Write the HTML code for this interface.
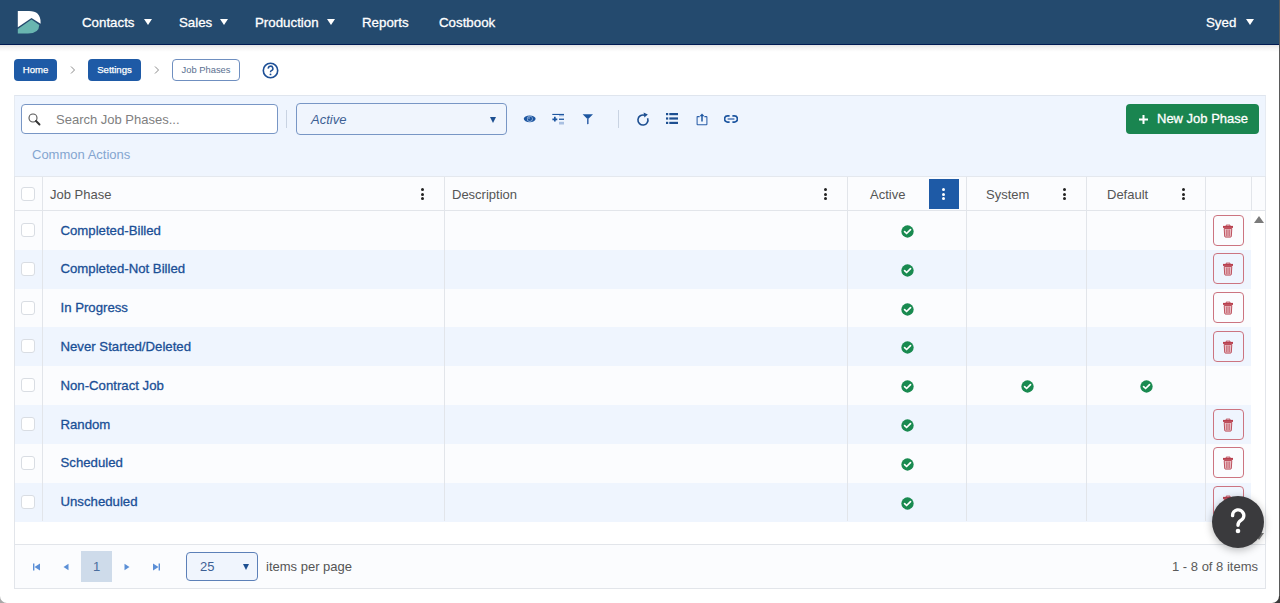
<!DOCTYPE html>
<html><head><meta charset="utf-8">
<style>
*{box-sizing:border-box;margin:0;padding:0}
html,body{width:1280px;height:603px;overflow:hidden;background:#fff;font-family:"Liberation Sans",sans-serif;position:relative}
.abs{position:absolute}
#nav{position:absolute;left:0;top:0;width:1280px;height:45px;background:#244a6e;border-bottom:1px solid #001a52}
#navsh{position:absolute;left:0;top:45px;width:1280px;height:7px;background:linear-gradient(#e3e3e3,#f4f4f4 40%,#fff)}
#nav .it{position:absolute;top:15px;color:#fff;font-size:13.3px;-webkit-text-stroke:0.3px #fff;white-space:nowrap;line-height:16px}
.tri{position:absolute;width:0;height:0;border-left:4px solid transparent;border-right:4px solid transparent;border-top:6px solid #fff}
.bc{position:absolute;top:59px;height:22px;border-radius:4px;background:#1e5aa6;color:#fff;font-size:9.6px;-webkit-text-stroke:0.25px #fff;line-height:21px;text-align:center}
.chev{position:absolute;top:66px}
#panel{position:absolute;left:14px;top:95px;width:1252px;height:82px;background:#eff5fe;border-top:1px solid #dfe5ee;border-left:1px solid #e6ebf2;border-right:1px solid #e6ebf2}
.inp{position:absolute;border:1px solid #7896c5;border-radius:4px}
.ico{position:absolute}
#grid{position:absolute;left:14px;top:176px;width:1252px;height:413px;border:1px solid #e2e5ea;border-top:1px solid #e4e8ee;background:#fff}
.hdr{position:absolute;left:0;top:0;width:1250px;height:34px;background:#fbfcfe;border-bottom:1px solid #e2e5ea}
.vl{position:absolute;width:1px;background:#e2e5ea}
.th{position:absolute;top:10px;font-size:13px;color:#555;line-height:16px;white-space:nowrap}
.keb{position:absolute;width:3px;top:11px}
.keb i{display:block;width:3px;height:3px;border-radius:50%;background:#222;margin-bottom:1.5px}
.row{position:absolute;left:0;width:1236px;height:39px}
.odd{background:#fbfcfe}
.even{background:#eff5fe}
.cb{position:absolute;left:6px;width:14px;height:14px;border:1px solid #d9dde3;border-radius:3px;background:#fff}
.lnk{position:absolute;left:45.5px;font-size:13.2px;-webkit-text-stroke:0.3px #1a4f96;color:#1a4f96;line-height:16px;white-space:nowrap}
.chk{position:absolute}
.trash{position:absolute;left:1198px;top:3.5px;width:31px;height:31px;border:1px solid #cc7480;border-radius:4px}
.trash svg{position:absolute;left:8px;top:8px}
#pager{position:absolute;left:0;top:367px;width:1250px;height:44px;background:#fbfcfe;border-top:1px solid #e2e5ea}
</style></head><body>
<div id="nav">
  <svg class="abs" style="left:17px;top:10px" width="25" height="25" viewBox="0 0 25 25">
    <path d="M0.8 1.1 H12 Q23.6 1.1 23.6 12.5 V13.8 L14.5 7.9 L0.8 17.2 Z" fill="#fff"/>
    <path d="M0.8 23.6 V18.9 L14.5 9.6 L22.3 15 Q22 23.6 11 23.6 Z" fill="#69b5b0"/>
  </svg>
  <div class="it" style="left:82px">Contacts</div><div class="tri" style="left:144px;top:19px"></div>
  <div class="it" style="left:179px">Sales</div><div class="tri" style="left:220px;top:19px"></div>
  <div class="it" style="left:255px">Production</div><div class="tri" style="left:327px;top:19px"></div>
  <div class="it" style="left:362px">Reports</div>
  <div class="it" style="left:439px">Costbook</div>
  <div class="it" style="left:1206px">Syed</div><div class="tri" style="left:1246px;top:19px"></div>
</div>
<div id="navsh"></div>
<div class="bc" style="left:14px;width:43px">Home</div>
<svg class="chev" style="left:70px" width="6" height="8" viewBox="0 0 6 8"><path d="M1 0.5 L4.5 4 L1 7.5" stroke="#8a8a8a" stroke-width="1" fill="none"/></svg>
<div class="bc" style="left:88px;width:53px">Settings</div>
<svg class="chev" style="left:154px" width="6" height="8" viewBox="0 0 6 8"><path d="M1 0.5 L4.5 4 L1 7.5" stroke="#8a8a8a" stroke-width="1" fill="none"/></svg>
<div class="bc" style="left:172px;width:68px;background:#fff;border:1px solid #6f8fc0;color:#5a6f90;-webkit-text-stroke:0;font-size:9.4px;line-height:20px">Job Phases</div>
<svg class="abs" style="left:262px;top:62px" width="17" height="17" viewBox="0 0 17 17"><circle cx="8.5" cy="8.5" r="7.2" stroke="#1d4f96" stroke-width="1.6" fill="none"/><path d="M6.3 6.6 A2.3 2.3 0 1 1 9.4 8.6 Q8.5 9 8.5 10.2" stroke="#1d4f96" stroke-width="1.5" fill="none"/><circle cx="8.5" cy="12.4" r="0.95" fill="#1d4f96"/></svg>

<div id="panel"></div>
<!-- search -->
<div class="inp" style="left:21px;top:104px;width:257px;height:30px;background:#fff">
  <svg class="abs" style="left:6px;top:8px" width="13" height="13" viewBox="0 0 13 13"><circle cx="5" cy="5" r="4" stroke="#555" stroke-width="1.1" fill="none"/><path d="M8 8 L11.5 11.5" stroke="#333" stroke-width="1.9" stroke-linecap="round"/></svg>
  <div class="abs" style="left:34px;top:7px;font-size:13px;color:#808080;line-height:16px;white-space:nowrap">Search Job Phases...</div>
</div>
<div class="abs" style="left:286px;top:110px;width:1px;height:18px;background:#c9d3e2"></div>
<div class="inp" style="left:296px;top:103px;width:211px;height:32px;background:#f0f5fd">
  <div class="abs" style="left:14px;top:8px;font-size:13px;font-style:italic;color:#3d5f94;line-height:16px">Active</div>
  <div class="abs" style="left:193px;top:13px;width:0;height:0;border-left:3.5px solid transparent;border-right:3.5px solid transparent;border-top:6px solid #1d4f91"></div>
</div>
<!-- icons -->
<svg class="ico" style="left:523px;top:114px" width="14" height="10" viewBox="0 0 14 10"><ellipse cx="6.7" cy="4.8" rx="5.9" ry="3.4" fill="#1d56a0"/><circle cx="6.8" cy="4.8" r="2.9" fill="#a8c0e4"/><circle cx="6.8" cy="4.8" r="2.3" fill="#1d56a0"/><circle cx="6" cy="4" r="0.7" fill="#c8d8f0"/></svg>
<svg class="ico" style="left:552px;top:113px" width="13" height="12" viewBox="0 0 13 12"><rect x="0.3" y="0.9" width="11.7" height="1.1" fill="#1d56a0"/><rect x="7" y="2" width="5" height="1.3" fill="#9db6dc"/><rect x="7" y="5.6" width="5" height="1.3" fill="#1d56a0"/><rect x="7" y="8.8" width="5" height="2.7" fill="#a9c0e2"/><path d="M0.4 6.3 H5.3 M2.85 3.8 V8.6" stroke="#1d56a0" stroke-width="1.7"/></svg>
<svg class="ico" style="left:582px;top:113px" width="12" height="12" viewBox="0 0 12 12"><path d="M0.6 1.2 H11 L6.5 5.8 H5.1 Z" fill="#1d56a0"/><path d="M5 5.5 H6.6 V10.5 L5.8 11.6 L5 10.5 Z" fill="#3d6aae"/></svg>
<div class="abs" style="left:618px;top:110px;width:1px;height:18px;background:#c9d3e2"></div>
<svg class="ico" style="left:636px;top:112px" width="14" height="15" viewBox="0 0 14 15"><path d="M8.6 3.3 A5 5 0 1 0 11.6 6.2" stroke="#1d4f91" stroke-width="1.6" fill="none"/><path d="M7.6 0.6 L11.8 2.6 L8.4 5.6 Z" fill="#1d4f91"/></svg>
<svg class="ico" style="left:666px;top:113px" width="12" height="11" viewBox="0 0 12 11"><rect x="0" y="0" width="2.2" height="2.2" fill="#1d4f91"/><rect x="3.3" y="0" width="8.7" height="2.2" fill="#1d4f91"/><rect x="0" y="4.4" width="2.2" height="2.2" fill="#1d4f91"/><rect x="3.3" y="4.4" width="8.7" height="2.2" fill="#1d4f91"/><rect x="0" y="8.8" width="2.2" height="2.2" fill="#1d4f91"/><rect x="3.3" y="8.8" width="8.7" height="2.2" fill="#1d4f91"/></svg>
<svg class="ico" style="left:696px;top:113px" width="12" height="13" viewBox="0 0 12 13"><path d="M3.6 3.6 H1.6 Q1.1 3.6 1.1 4.1 V11.3 Q1.1 11.8 1.6 11.8 H10.4 Q10.9 11.8 10.9 11.3 V4.1 Q10.9 3.6 10.4 3.6 H8.4" stroke="#2a5ea8" stroke-width="1.05" fill="none"/><path d="M6 8.6 V2.2" stroke="#1d56a0" stroke-width="1.5"/><path d="M3.5 3.3 L6 0.5 L8.5 3.3 Z" fill="#1d56a0"/></svg>
<svg class="ico" style="left:724px;top:115px" width="14" height="8" viewBox="0 0 14 8"><path d="M5.6 0.95 H3.6 A3 3 0 0 0 3.6 7.05 H5.6" stroke="#1d56a0" stroke-width="1.7" fill="none"/><path d="M8.4 0.95 H10.4 A3 3 0 0 1 10.4 7.05 H8.4" stroke="#1d56a0" stroke-width="1.7" fill="none"/><rect x="3.6" y="3.2" width="6.8" height="1.6" fill="#5a82bd"/></svg>
<!-- new button -->
<div class="abs" style="left:1126px;top:104px;width:133px;height:30px;background:#1a8550;border-radius:4px">
  <svg class="abs" style="left:13px;top:11px" width="9" height="9" viewBox="0 0 9 9"><path d="M4.5 0 V9 M0 4.5 H9" stroke="#fff" stroke-width="2"/></svg>
  <div class="abs" style="left:31px;top:7px;font-size:13px;-webkit-text-stroke:0.3px #fff;color:#fff;line-height:16px;white-space:nowrap">New Job Phase</div>
</div>
<div class="abs" style="left:32px;top:147px;font-size:13px;color:#84a5d0;line-height:16px;white-space:nowrap">Common Actions</div>

<!-- grid -->
<div id="grid">
  <div class="hdr">
    <div class="cb" style="top:10px"></div>
    <div class="th" style="left:35px">Job Phase</div>
    <div class="keb" style="left:406px"><i></i><i></i><i></i></div>
    <div class="th" style="left:437px">Description</div>
    <div class="keb" style="left:809px"><i></i><i></i><i></i></div>
    <div class="th" style="left:855px">Active</div>
    <div class="abs" style="left:914px;top:2px;width:30px;height:30px;background:#1e5aa6"></div>
    <div class="keb" style="left:927px;top:11px"><i style="background:#fff"></i><i style="background:#fff"></i><i style="background:#fff"></i></div>
    <div class="th" style="left:971px">System</div>
    <div class="keb" style="left:1048px"><i></i><i></i><i></i></div>
    <div class="th" style="left:1092px">Default</div>
    <div class="keb" style="left:1167px"><i></i><i></i><i></i></div>
  </div>
  <div class="row odd" style="top:34.0px"><div class="cb" style="top:12px"></div><div class="lnk" style="top:11.5px">Completed-Billed</div><svg class="chk" style="top:14px;left:885.5px" width="13" height="13" viewBox="0 0 13 13"><circle cx="6.5" cy="6.5" r="6.15" fill="#198a50"/><path d="M3.6 6.6 L5.6 8.5 L9.5 4.6" stroke="#fff" stroke-width="1.7" fill="none" stroke-linecap="round" stroke-linejoin="round"/></svg><div class="trash"><svg width="12" height="14" viewBox="0 0 12 14"><path d="M4.2 2 V1.1 H8 V2" fill="none" stroke="#b8404e" stroke-width="0.9"/><rect x="1" y="1.9" width="10" height="2" fill="#b8404e"/><path d="M2.2 4.5 H9.8 L9.3 12.4 Q9.2 13.1 8.5 13.1 H3.5 Q2.8 13.1 2.7 12.4 Z" fill="#e8c0c5" stroke="#b8404e" stroke-width="0.9"/><path d="M4.6 5.5 V12 M6 5.5 V12 M7.4 5.5 V12" stroke="#c0505e" stroke-width="0.7"/></svg></div></div><div class="row even" style="top:72.8px"><div class="cb" style="top:12px"></div><div class="lnk" style="top:11.5px">Completed-Not Billed</div><svg class="chk" style="top:14px;left:885.5px" width="13" height="13" viewBox="0 0 13 13"><circle cx="6.5" cy="6.5" r="6.15" fill="#198a50"/><path d="M3.6 6.6 L5.6 8.5 L9.5 4.6" stroke="#fff" stroke-width="1.7" fill="none" stroke-linecap="round" stroke-linejoin="round"/></svg><div class="trash"><svg width="12" height="14" viewBox="0 0 12 14"><path d="M4.2 2 V1.1 H8 V2" fill="none" stroke="#b8404e" stroke-width="0.9"/><rect x="1" y="1.9" width="10" height="2" fill="#b8404e"/><path d="M2.2 4.5 H9.8 L9.3 12.4 Q9.2 13.1 8.5 13.1 H3.5 Q2.8 13.1 2.7 12.4 Z" fill="#e8c0c5" stroke="#b8404e" stroke-width="0.9"/><path d="M4.6 5.5 V12 M6 5.5 V12 M7.4 5.5 V12" stroke="#c0505e" stroke-width="0.7"/></svg></div></div><div class="row odd" style="top:111.6px"><div class="cb" style="top:12px"></div><div class="lnk" style="top:11.5px">In Progress</div><svg class="chk" style="top:14px;left:885.5px" width="13" height="13" viewBox="0 0 13 13"><circle cx="6.5" cy="6.5" r="6.15" fill="#198a50"/><path d="M3.6 6.6 L5.6 8.5 L9.5 4.6" stroke="#fff" stroke-width="1.7" fill="none" stroke-linecap="round" stroke-linejoin="round"/></svg><div class="trash"><svg width="12" height="14" viewBox="0 0 12 14"><path d="M4.2 2 V1.1 H8 V2" fill="none" stroke="#b8404e" stroke-width="0.9"/><rect x="1" y="1.9" width="10" height="2" fill="#b8404e"/><path d="M2.2 4.5 H9.8 L9.3 12.4 Q9.2 13.1 8.5 13.1 H3.5 Q2.8 13.1 2.7 12.4 Z" fill="#e8c0c5" stroke="#b8404e" stroke-width="0.9"/><path d="M4.6 5.5 V12 M6 5.5 V12 M7.4 5.5 V12" stroke="#c0505e" stroke-width="0.7"/></svg></div></div><div class="row even" style="top:150.4px"><div class="cb" style="top:12px"></div><div class="lnk" style="top:11.5px">Never Started/Deleted</div><svg class="chk" style="top:14px;left:885.5px" width="13" height="13" viewBox="0 0 13 13"><circle cx="6.5" cy="6.5" r="6.15" fill="#198a50"/><path d="M3.6 6.6 L5.6 8.5 L9.5 4.6" stroke="#fff" stroke-width="1.7" fill="none" stroke-linecap="round" stroke-linejoin="round"/></svg><div class="trash"><svg width="12" height="14" viewBox="0 0 12 14"><path d="M4.2 2 V1.1 H8 V2" fill="none" stroke="#b8404e" stroke-width="0.9"/><rect x="1" y="1.9" width="10" height="2" fill="#b8404e"/><path d="M2.2 4.5 H9.8 L9.3 12.4 Q9.2 13.1 8.5 13.1 H3.5 Q2.8 13.1 2.7 12.4 Z" fill="#e8c0c5" stroke="#b8404e" stroke-width="0.9"/><path d="M4.6 5.5 V12 M6 5.5 V12 M7.4 5.5 V12" stroke="#c0505e" stroke-width="0.7"/></svg></div></div><div class="row odd" style="top:189.2px"><div class="cb" style="top:12px"></div><div class="lnk" style="top:11.5px">Non-Contract Job</div><svg class="chk" style="top:14px;left:885.5px" width="13" height="13" viewBox="0 0 13 13"><circle cx="6.5" cy="6.5" r="6.15" fill="#198a50"/><path d="M3.6 6.6 L5.6 8.5 L9.5 4.6" stroke="#fff" stroke-width="1.7" fill="none" stroke-linecap="round" stroke-linejoin="round"/></svg><svg class="chk" style="top:14px;left:1005.5px" width="13" height="13" viewBox="0 0 13 13"><circle cx="6.5" cy="6.5" r="6.15" fill="#198a50"/><path d="M3.6 6.6 L5.6 8.5 L9.5 4.6" stroke="#fff" stroke-width="1.7" fill="none" stroke-linecap="round" stroke-linejoin="round"/></svg><svg class="chk" style="top:14px;left:1125px" width="13" height="13" viewBox="0 0 13 13"><circle cx="6.5" cy="6.5" r="6.15" fill="#198a50"/><path d="M3.6 6.6 L5.6 8.5 L9.5 4.6" stroke="#fff" stroke-width="1.7" fill="none" stroke-linecap="round" stroke-linejoin="round"/></svg></div><div class="row even" style="top:228.0px"><div class="cb" style="top:12px"></div><div class="lnk" style="top:11.5px">Random</div><svg class="chk" style="top:14px;left:885.5px" width="13" height="13" viewBox="0 0 13 13"><circle cx="6.5" cy="6.5" r="6.15" fill="#198a50"/><path d="M3.6 6.6 L5.6 8.5 L9.5 4.6" stroke="#fff" stroke-width="1.7" fill="none" stroke-linecap="round" stroke-linejoin="round"/></svg><div class="trash"><svg width="12" height="14" viewBox="0 0 12 14"><path d="M4.2 2 V1.1 H8 V2" fill="none" stroke="#b8404e" stroke-width="0.9"/><rect x="1" y="1.9" width="10" height="2" fill="#b8404e"/><path d="M2.2 4.5 H9.8 L9.3 12.4 Q9.2 13.1 8.5 13.1 H3.5 Q2.8 13.1 2.7 12.4 Z" fill="#e8c0c5" stroke="#b8404e" stroke-width="0.9"/><path d="M4.6 5.5 V12 M6 5.5 V12 M7.4 5.5 V12" stroke="#c0505e" stroke-width="0.7"/></svg></div></div><div class="row odd" style="top:266.8px"><div class="cb" style="top:12px"></div><div class="lnk" style="top:11.5px">Scheduled</div><svg class="chk" style="top:14px;left:885.5px" width="13" height="13" viewBox="0 0 13 13"><circle cx="6.5" cy="6.5" r="6.15" fill="#198a50"/><path d="M3.6 6.6 L5.6 8.5 L9.5 4.6" stroke="#fff" stroke-width="1.7" fill="none" stroke-linecap="round" stroke-linejoin="round"/></svg><div class="trash"><svg width="12" height="14" viewBox="0 0 12 14"><path d="M4.2 2 V1.1 H8 V2" fill="none" stroke="#b8404e" stroke-width="0.9"/><rect x="1" y="1.9" width="10" height="2" fill="#b8404e"/><path d="M2.2 4.5 H9.8 L9.3 12.4 Q9.2 13.1 8.5 13.1 H3.5 Q2.8 13.1 2.7 12.4 Z" fill="#e8c0c5" stroke="#b8404e" stroke-width="0.9"/><path d="M4.6 5.5 V12 M6 5.5 V12 M7.4 5.5 V12" stroke="#c0505e" stroke-width="0.7"/></svg></div></div><div class="row even" style="top:305.6px"><div class="cb" style="top:12px"></div><div class="lnk" style="top:11.5px">Unscheduled</div><svg class="chk" style="top:14px;left:885.5px" width="13" height="13" viewBox="0 0 13 13"><circle cx="6.5" cy="6.5" r="6.15" fill="#198a50"/><path d="M3.6 6.6 L5.6 8.5 L9.5 4.6" stroke="#fff" stroke-width="1.7" fill="none" stroke-linecap="round" stroke-linejoin="round"/></svg><div class="trash"><svg width="12" height="14" viewBox="0 0 12 14"><path d="M4.2 2 V1.1 H8 V2" fill="none" stroke="#b8404e" stroke-width="0.9"/><rect x="1" y="1.9" width="10" height="2" fill="#b8404e"/><path d="M2.2 4.5 H9.8 L9.3 12.4 Q9.2 13.1 8.5 13.1 H3.5 Q2.8 13.1 2.7 12.4 Z" fill="#e8c0c5" stroke="#b8404e" stroke-width="0.9"/><path d="M4.6 5.5 V12 M6 5.5 V12 M7.4 5.5 V12" stroke="#c0505e" stroke-width="0.7"/></svg></div></div>
  <div class="vl" style="left:27px;top:0;height:344px"></div>
  <div class="vl" style="left:429px;top:0;height:344px"></div>
  <div class="vl" style="left:832px;top:0;height:344px"></div>
  <div class="vl" style="left:951px;top:0;height:344px"></div>
  <div class="vl" style="left:1071px;top:0;height:344px"></div>
  <div class="vl" style="left:1190px;top:0;height:344px"></div>
  <div class="vl" style="left:1236px;top:0;height:34px"></div>
  <div class="abs" style="left:1239px;top:39px;width:0;height:0;border-left:5px solid transparent;border-right:5px solid transparent;border-bottom:7px solid #7a7a7a"></div>
  <div class="abs" style="left:1239px;top:356px;width:0;height:0;border-left:5px solid transparent;border-right:5px solid transparent;border-top:7px solid #7a7a7a"></div>
  <div id="pager">
    <svg class="abs" style="left:18px;top:17.5px" width="8" height="8" viewBox="0 0 8 8"><rect x="0" y="0.5" width="1.4" height="7" fill="#5b8fd6"/><path d="M7 0.5 V7.5 L1.5 4 Z" fill="#5b8fd6"/></svg>
    <svg class="abs" style="left:48.3px;top:17.5px" width="6" height="8" viewBox="0 0 6 8"><path d="M5.5 0.8 V7.2 L0.5 4 Z" fill="#5b8fd6"/></svg>
    <div class="abs" style="left:66px;top:6px;width:31px;height:31px;background:#cedbea;color:#4a6e9e;font-size:13px;line-height:31px;text-align:center">1</div>
    <svg class="abs" style="left:109px;top:17.5px" width="6" height="8" viewBox="0 0 6 8"><path d="M0.5 0.8 V7.2 L5.5 4 Z" fill="#5b8fd6"/></svg>
    <svg class="abs" style="left:137px;top:17.5px" width="8" height="8" viewBox="0 0 8 8"><rect x="6.6" y="0.5" width="1.4" height="7" fill="#5b8fd6"/><path d="M1 0.5 V7.5 L6.5 4 Z" fill="#5b8fd6"/></svg>
    <div class="inp" style="left:171px;top:7px;width:72px;height:29px;background:#f0f5fd;border-color:#5c80b8">
      <div class="abs" style="left:13px;top:6px;font-size:13px;color:#3d5f94;line-height:16px">25</div>
      <div class="abs" style="left:56px;top:11px;width:0;height:0;border-left:3.5px solid transparent;border-right:3.5px solid transparent;border-top:6px solid #1d4f91"></div>
    </div>
    <div class="abs" style="left:251px;top:14px;font-size:13px;color:#555;line-height:16px;white-space:nowrap">items per page</div>
    <div class="abs" style="right:7px;top:14px;font-size:13px;color:#5a5a5a;line-height:16px;white-space:nowrap">1 - 8 of 8 items</div>
  </div>
</div>
<!-- help fab -->
<div class="abs" style="left:1212px;top:496px;width:52px;height:52px;border-radius:50%;background:#3a3a3d;box-shadow:0 2px 8px rgba(0,0,0,.28)">
  <svg class="abs" style="left:0;top:0" width="52" height="52" viewBox="0 0 52 52"><path d="M20.6 19.6 A5.6 5.6 0 1 1 28.8 24.4 Q26 26.2 26 29.2" stroke="#fff" stroke-width="3.4" fill="none" stroke-linecap="round"/><circle cx="26" cy="35" r="2.3" fill="#fff"/></svg>
</div>
<!-- window edges -->
<div class="abs" style="left:1279px;top:0;width:1px;height:603px;background:#5a5a5a"></div>
<svg class="abs" style="left:0;top:596px" width="7" height="7" viewBox="0 0 7 7"><path d="M0 0 V7 H7 A7 7 0 0 1 0 0 Z" fill="#a8a8a8"/></svg>
<svg class="abs" style="left:1272px;top:596px" width="8" height="7" viewBox="0 0 8 7"><path d="M8 0 V7 H0 A7 7 0 0 0 7 0 Z" fill="#3a3a3a"/></svg>
</body></html>
